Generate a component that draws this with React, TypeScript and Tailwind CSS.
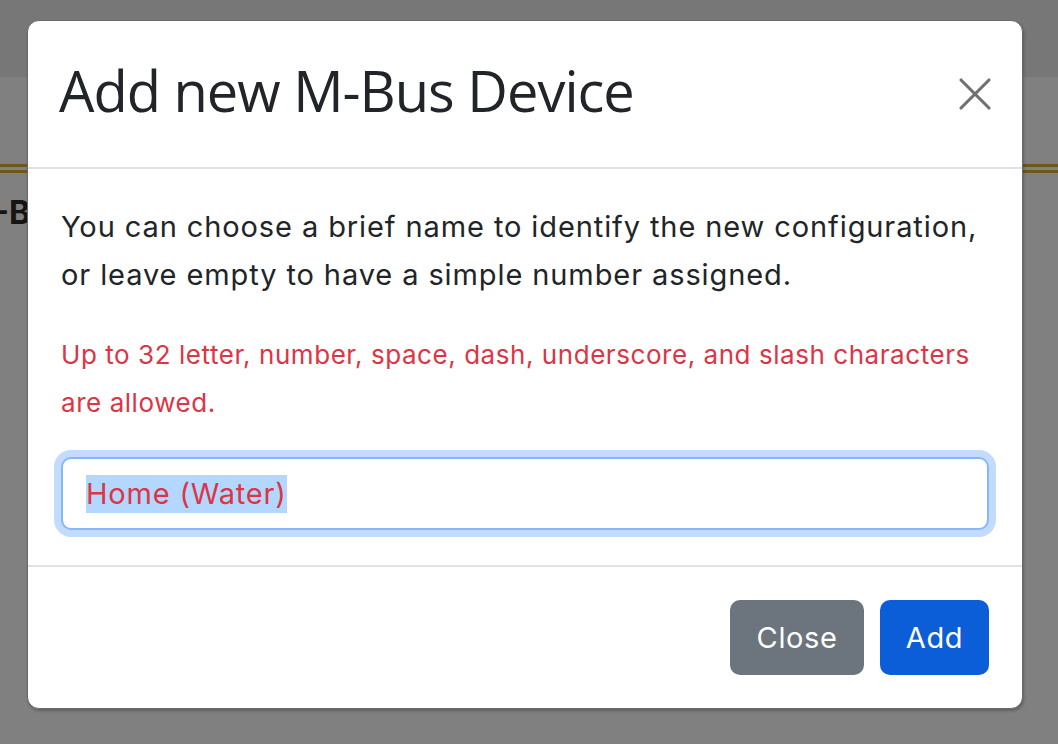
import { X } from "lucide-react";

const sans = "font-['Inter','Liberation_Sans',sans-serif]";

export default function App() {
  return (
    <div className="relative h-[744px] w-full overflow-hidden bg-[#808080]">
      {/* page behind the backdrop */}
      <div className="h-[77px] bg-[#777777]" />
      <div className="mt-[87px] flex flex-col gap-[3px]">
        <div className="h-[3px] bg-[#6e5819]" />
        <div className="h-[3px] bg-[#6e5819]" />
      </div>
      <div className={`mt-[24px] -ml-[6px] text-[32px] font-bold leading-none text-[#151515] ${sans}`}>
        -B
      </div>

      {/* modal */}
      <div className="absolute inset-0 flex items-start">
        <div
          className={`ml-[27px] mt-[20px] flex w-[996px] flex-col rounded-[12px] border border-[#6a6a6a] bg-white shadow-[1px_2px_3px_rgba(0,0,0,0.25)] ${sans}`}
        >
          {/* header */}
          <div className="flex h-[148px] items-center justify-between border-b-2 border-[#dee2e6] pb-[8px] pl-[31px] pr-[19px]">
            <h5 className="font-['Open_Sans',sans-serif] text-[56px] leading-none tracking-[-1px] text-[#212529]">
              Add new M-Bus Device
            </h5>
            <button className="mt-[8px] flex h-[56px] w-[56px] items-center justify-center text-[#707070]">
              <X size={56} strokeWidth={1.35} />
            </button>
          </div>

          {/* body */}
          <div className="px-[33px] pb-[35px] pt-[34px]">
            <p className="text-[29px] leading-[48px] tracking-[0.9px] text-[#212529]">
              You can choose a brief name to identify the new configuration, or leave empty to have a simple number
              assigned.
            </p>
            <p className="mt-[32px] text-[26px] leading-[48px] tracking-[0.55px] text-[#dc3545]">
              Up to 32 letter, number, space, dash, underscore, and slash characters are allowed.
            </p>
            <div className="mt-[30px] flex h-[73px] items-center rounded-[10px] border-2 border-[#86b7fe] bg-white px-[23px] shadow-[0_0_0_7px_#c2dbfe]">
              <span className="bg-[#b3d7fe] text-[29px] leading-[38px] tracking-[0.8px] text-[#dc3545]">
                Home (Water)
              </span>
            </div>
          </div>

          {/* footer */}
          <div className="flex items-center justify-end gap-[16px] border-t-2 border-[#dee2e6] px-[33px] pb-[33px] pt-[33px]">
            <button className="h-[75px] w-[134px] rounded-[10px] bg-[#6c757d] text-[29px] tracking-[0.6px] text-white">
              Close
            </button>
            <button className="h-[75px] w-[109px] rounded-[10px] bg-[#0b5ed7] text-[29px] tracking-[0.6px] text-white">
              Add
            </button>
          </div>
        </div>
      </div>
    </div>
  );
}
